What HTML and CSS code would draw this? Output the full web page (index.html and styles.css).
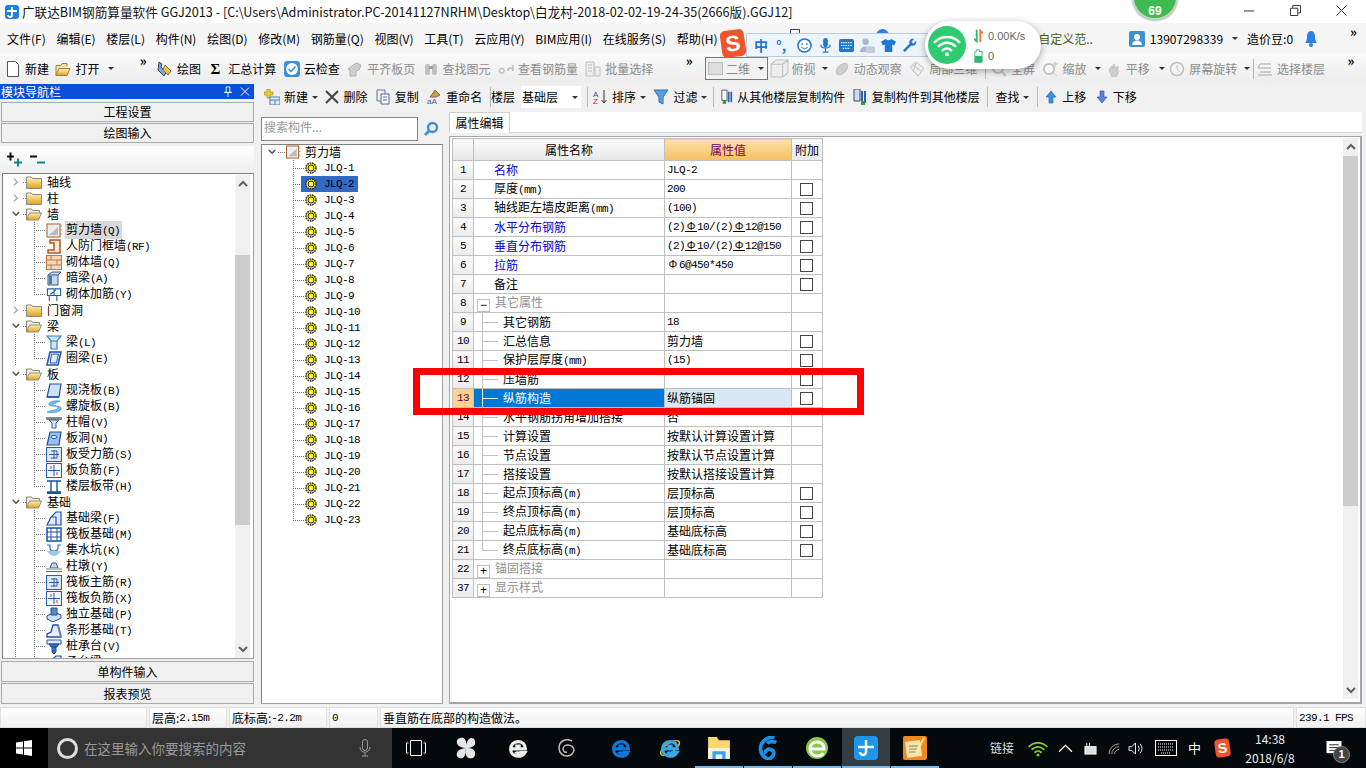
FILE: index.html
```html
<!DOCTYPE html>
<html lang="zh-CN">
<head>
<meta charset="utf-8">
<title>广联达BIM钢筋算量软件 GGJ2013</title>
<link rel="stylesheet" href="styles.css">
</head>
<body>
<svg class="defs" aria-hidden="true">
<defs>
<linearGradient id="gold" x1="0" y1="0" x2="0" y2="1"><stop offset="0" stop-color="#fff3c0"/><stop offset="1" stop-color="#e0a020"/></linearGradient>
<symbol id="chev-r" viewBox="0 0 8 10"><path d="M1.500 1l4 4-4 4" fill="none" stroke="#b0b0b0" stroke-width="2"/></symbol>
<symbol id="chev-d" viewBox="0 0 10 8"><path d="M1 1.500l4 4 4-4" fill="none" stroke="#555" stroke-width="2"/></symbol>
<symbol id="f-c" viewBox="0 0 16 13"><path d="M.5 3V1.500h5l1 1.500h9v10H.5z" fill="url(#gold)" stroke="#8a8a78"/></symbol>
<symbol id="f-o" viewBox="0 0 16 13"><path d="M.5 12V1.500h5l1 1.500h7v2" fill="#f4f0e0" stroke="#8a8a78"/><path d="M.5 12.500l3-7h12l-3 7z" fill="url(#gold)" stroke="#8a8a78"/></symbol>
<symbol id="wall" viewBox="0 0 16 15"><rect x="1" y="1" width="13" height="13" fill="#eee" stroke="#a05a2c"/><path d="M3 12l9-8v8z" fill="#bbb"/><path d="M14 3h2M14 7h2M14 11h2" stroke="#e07820"/></symbol>
<symbol id="door" viewBox="0 0 16 15"><path d="M4 1h10v13H2v-3h6V4H4z" fill="#fbe9d8" stroke="#b05a20" stroke-width="1.500"/></symbol>
<symbol id="brick" viewBox="0 0 16 15"><rect x=".5" y=".5" width="15" height="14" fill="#f8d8b8" stroke="#c07840"/><path d="M0 5h16M0 10h16M5 0v5M11 5v5M5 10v5" stroke="#c07840"/></symbol>
<symbol id="dbeam" viewBox="0 0 16 15"><path d="M2 4l4-3h9l-3 3v10H2z" fill="#c8d8ea" stroke="#305a90"/><path d="M2 4h10" stroke="#305a90"/><rect x="3" y="5" width="3" height="8" fill="#4a7ab0"/></symbol>
<symbol id="arebar" viewBox="0 0 16 16"><path d="M1 2h14v7H1zM3 9v6M11 9v6M4 8l6-5M8 3v6" fill="#fff" stroke="#2560b0" stroke-width="1.200"/></symbol>
<symbol id="beam" viewBox="0 0 16 15"><path d="M1 1h14l-4 5v8H5V6z" fill="#cfe4f8" stroke="#3a80c8" stroke-width="1.200"/><path d="M5 6h6" stroke="#3a80c8"/></symbol>
<symbol id="ring" viewBox="0 0 16 15"><path d="M4 1h11l-3 13H1z" fill="#fff" stroke="#1c50a8" stroke-width="1.500"/><path d="M5.500 3h7l-2 9H4z" fill="#dfeafa" stroke="#1c50a8"/></symbol>
<symbol id="slab" viewBox="0 0 16 15"><path d="M4 1h11l-2 13H1z" fill="#cfe2f8" stroke="#1c50a8" stroke-width="1.200"/><path d="M1 14h12" stroke="#1c50a8" stroke-width="1.500"/></symbol>
<symbol id="spiral" viewBox="0 0 16 15"><path d="M14 2C8 1 2 3 3 6c1 2 9 0 9 3 0 2-7 2-11 4 5 1 12 1 14-3 1-3-7-3-8-4s3-2 7-4z" fill="#7ab8ee" stroke="#2f7fd0" stroke-width=".6"/></symbol>
<symbol id="cap" viewBox="0 0 16 15"><rect x="0" y="2" width="16" height="3" fill="#888"/><path d="M3 5h10l-3 3v5H6V8z" fill="#dbe8f8" stroke="#2060b0"/></symbol>
<symbol id="hole" viewBox="0 0 16 15"><path d="M4 1h11l-2 13H1z" fill="#9cc0ea" stroke="#1c50a8" stroke-width="1.200"/><ellipse cx="8" cy="6" rx="3" ry="1.500" fill="#fff" stroke="#1c50a8"/></symbol>
<symbol id="grid" viewBox="0 0 16 15"><rect x=".5" y=".5" width="15" height="14" fill="#dce9f9" stroke="#2560b0"/><path d="M3 7.500h10M8 3v9M5 4h6v7H5" fill="none" stroke="#2560b0"/></symbol>
<symbol id="grid2" viewBox="0 0 16 15"><rect x=".5" y=".5" width="15" height="14" fill="#eef4fc" stroke="#2560b0"/><path d="M2 7.500h12M8 2v11" stroke="#2560b0"/><path d="M5 3v3M11 9v3" stroke="#e04040"/></symbol>
<symbol id="strip" viewBox="0 0 16 15"><path d="M1 2h14M1 13h14M5 2v11M11 2v11" stroke="#1c50a8" stroke-width="1.400"/><rect x="1" y="13" width="14" height="2" fill="#1c50a8"/></symbol>
<symbol id="fbeam" viewBox="0 0 16 15"><path d="M1 14l4-8 5-5h5v13zM5 6h5v8H5" fill="#dce9f9" stroke="#1c50a8" stroke-width="1.200"/></symbol>
<symbol id="raft" viewBox="0 0 16 15"><rect x="1" y="1" width="14" height="13" fill="#fff" stroke="#1c50a8" stroke-width="1.500"/><path d="M1 5h14M1 10h14M5 1v13M11 1v13" stroke="#1c50a8"/></symbol>
<symbol id="pit" viewBox="0 0 16 15"><path d="M1 2h3v3q0 3 4 3t4-3V2h3" fill="none" stroke="#2f6fc0" stroke-width="1.200"/><path d="M1 8q7 10 14 0z" fill="#a8c8e8"/></symbol>
<symbol id="pier" viewBox="0 0 16 15"><path d="M6 4h4l2 5H4z" fill="#c8d8ea" stroke="#305a90"/><rect x="0" y="9" width="16" height="2" fill="#bbb"/><rect x="0" y="12" width="16" height="1" fill="#666"/></symbol>
<symbol id="iso" viewBox="0 0 16 15"><path d="M1 9l7-4 7 3v3l-8 4-6-3z" fill="#cfe0f4" stroke="#1c50a8"/><path d="M5 1h6v7H5z" fill="#5b8ac0" stroke="#1c50a8"/></symbol>
<symbol id="sfound" viewBox="0 0 16 15"><path d="M1 14v-3l4-2 2-7h5l3 12z" fill="#e6eef9" stroke="#1c50a8" stroke-width="1.300"/><path d="M12 2l3 12" stroke="#5b8ac0" stroke-width="2"/></symbol>
<symbol id="pile" viewBox="0 0 16 15"><path d="M1 1h14v4H1z" fill="#dce9f9" stroke="#305a90"/><path d="M3 5h10l-2 3H5zM6 8h4v5l-2 2-2-2z" fill="#3a70b8" stroke="#1c50a8"/></symbol>
<symbol id="gear" viewBox="0 0 12 12"><circle cx="6" cy="6" r="5" fill="#ffee00" stroke="#333" stroke-width="1.600" stroke-dasharray="1.600 .8"/><circle cx="6" cy="6" r="3" fill="#ffee00" stroke="#333"/><circle cx="6" cy="6" r="1" fill="#fff"/></symbol>
<symbol id="wifi" viewBox="0 0 24 20"><path d="M1.500 7.500a15 15 0 0 1 21 0M5 11a10 10 0 0 1 14 0M8.500 14.500a5 5 0 0 1 7 0" fill="none" stroke="currentColor" stroke-width="2.200" stroke-linecap="round"/><circle cx="12" cy="18" r="1.700" fill="currentColor"/></symbol>
<symbol id="ie" viewBox="0 0 24 24"><path d="M4 13h16c0-5-3-8-8-8s-8 4-8 8.500S8 21 12 21c3 0 6-1.500 7.500-4h-5c-1 1-4 1-5-1M9 10h6" fill="none" stroke="currentColor" stroke-width="3.500"/></symbol>
</defs>
</svg>

<header class="titlebar">
  <svg class="app" viewBox="0 0 14 14"><rect width="14" height="14" rx="3" fill="#2080e0"/><path d="M7 2v8a2 2 0 0 1-4 0M2 6h10" fill="none" stroke="#fff" stroke-width="1.800"/></svg>
  <span class="title">广联达BIM钢筋算量软件 GGJ2013 - [C:\Users\Administrator.PC-20141127NRHM\Desktop\白龙村-2018-02-02-19-24-35(2666版).GGJ12]</span>
  <div class="winbtns">
    <svg viewBox="0 0 12 12"><path d="M0 6.500h11" stroke="#222"/></svg>
    <svg viewBox="0 0 12 12"><path d="M.5 3.500h8v8h-8zM3 3V.5h8.500v8H9" fill="none" stroke="#222"/></svg>
    <svg viewBox="0 0 12 12"><path d="M.5.500l11 11M11.500.500l-11 11" stroke="#222"/></svg>
  </div>
</header>

<nav class="menubar">
  <span>文件(F)</span><span>编辑(E)</span><span>楼层(L)</span><span>构件(N)</span><span>绘图(D)</span><span>修改(M)</span><span>钢筋量(Q)</span><span>视图(V)</span><span>工具(T)</span><span>云应用(Y)</span><span>BIM应用(I)</span><span>在线服务(S)</span><span>帮助(H)</span>
  <div class="menuright">
    <span class="custom">自定义范..</span>
    <span class="user"><svg viewBox="0 0 16 16"><rect width="16" height="16" rx="2" fill="#3f8fd0"/><circle cx="8" cy="6" r="3" fill="#fff"/><path d="M3 14c0-6 10-6 10 0z" fill="#fff"/></svg><span>13907298339</span></span>
    <i class="caret"></i>
    <span>造价豆:0</span>
    <svg class="bell" viewBox="0 0 12 18"><path d="M6 1c3 0 4 3 4 6s1 5 2 6H0c1-1 2-3 2-6s1-6 4-6z" fill="#2a80e8"/><circle cx="6" cy="15" r="2" fill="#2a80e8"/></svg>
    <b class="more">»</b>
  </div>
</nav>

<div class="toolbar">
  <span class="t"><svg class="ti" viewBox="0 0 14 16"><path d="M1.500.500h8l3 3v12h-11z" fill="#fff" stroke="#555"/></svg>新建</span>
  <span class="t t-open"><svg class="ti" viewBox="0 0 16 15"><path d="M1 14V4h5l1-2h5v3" fill="#f5e2a8" stroke="#a08030"/><path d="M1 14l3-7h11l-3 7z" fill="url(#gold)" stroke="#a08030"/></svg>打开<i class="caret c8"></i></span>
  <b class="more m-open">»</b>
  <span class="t"><svg class="ti" viewBox="0 0 16 16"><path d="M2 1l3 2-1 3 5 6-2 3-6-6z" fill="#7aa8d8" stroke="#345"/><path d="M8 4l6 6-3 4-5-5z" fill="#f0c040" stroke="#865"/></svg>绘图</span>
  <span class="t sum"><b>Σ</b>汇总计算</span>
  <span class="t"><svg class="ti" viewBox="0 0 16 16"><rect width="16" height="16" rx="3" fill="#3a90dc"/><circle cx="8" cy="8" r="6" fill="#fff"/><path d="M4.500 8l2.500 2.500 4.500-5" fill="none" stroke="#3a90dc" stroke-width="1.600"/></svg>云检查</span>
  <span class="t off"><svg class="ti" viewBox="0 0 16 16"><path d="M1 8l8-6 5 2-2 5-3 1v5H3V9z" fill="#ccc" stroke="#aaa"/></svg>平齐板页</span>
  <span class="t off"><svg class="ti" viewBox="0 0 16 16"><rect x="2" y="3" width="5" height="11" rx="2" fill="#bbb"/><rect x="9" y="3" width="5" height="11" rx="2" fill="#bbb"/><rect x="6" y="5" width="4" height="3" fill="#999"/></svg>查找图元</span>
  <span class="t off"><svg class="ti" viewBox="0 0 16 16"><path d="M1 10c2-4 5-3 5 0s-4 3-5 0zM10 10c0-4 5-4 5 0M15 4v6" fill="none" stroke="#bbb" stroke-width="1.500"/></svg>查看钢筋量</span>
  <span class="t off"><svg class="ti" viewBox="0 0 16 16"><path d="M1 1h8v14H1zM3 4h4M3 7h4M3 10h4M10 6h5v9h-5z" fill="#eee" stroke="#bbb"/></svg>批量选择</span>
  <b class="more m-view">»</b>
  <span class="dim-box"><i class="sq"></i>二维<i class="caret"></i></span>
  <span class="t off tight"><svg class="ti big" viewBox="0 0 18 18"><path d="M1 5l5-4h11v12l-5 4H1zM1 5h11v12M12 5l5-4" fill="#eee" stroke="#bbb"/></svg>俯视<i class="caret c8"></i></span>
  <span class="t off gapl"><svg class="ti" viewBox="0 0 16 16"><ellipse cx="8" cy="8" rx="7" ry="4" transform="rotate(-45 8 8)" fill="#ccc" stroke="#bbb"/></svg>动态观察</span>
  <span class="t off"><svg class="ti" viewBox="0 0 16 16"><path d="M1 6l6-5 8 6-6 8z" fill="#eee" stroke="#bbb"/><path d="M4 4l8 6M7 2l-3 9" stroke="#bbb"/></svg>局部三维</span>
  <i class="sep"></i>
  <span class="t off t-full"><svg class="ti" viewBox="0 0 16 16"><circle cx="7" cy="7" r="5" fill="none" stroke="#bbb" stroke-width="2"/><path d="M11 11l4 4" stroke="#bbb" stroke-width="2"/></svg>全屏</span>
  <span class="t off"><svg class="ti" viewBox="0 0 16 16"><circle cx="7" cy="8" r="5" fill="#fff" stroke="#bbb" stroke-width="2"/><path d="M11 12l4 3M13 1v5M11 3h5" stroke="#bbb"/></svg>缩放<i class="caret c8"></i></span>
  <span class="t off gapl2"><svg class="ti" viewBox="0 0 16 16"><path d="M3 9l3-4 1 3 1-5 2 5 2-3v7l-2 4H6z" fill="#ccc" stroke="#bbb"/></svg>平移<i class="caret c8"></i></span>
  <span class="t off gapl2"><svg class="ti" viewBox="0 0 16 16"><circle cx="8" cy="8" r="6.500" fill="#f4f4f4" stroke="#bbb" stroke-width="1.500"/><path d="M8 4v4l3 3" fill="none" stroke="#bbb"/></svg>屏幕旋转<i class="caret c4"></i></span>
  <i class="sep sepn"></i>
  <span class="t off"><svg class="ti" viewBox="0 0 16 16"><path d="M3 3h11M1 7h13M3 11h11M1 14h14M1 7l2-4" fill="none" stroke="#bbb" stroke-width="1.500"/></svg>选择楼层</span>
  <b class="more end">»</b>
</div>

<main class="main">
  <aside class="left">
    <div class="dock"><span>模块导航栏</span><span class="dockbtn"><svg viewBox="0 0 10 12"><path d="M3 1h4v6h2H1h2zM5 7v5" fill="none" stroke="#fff"/></svg><svg viewBox="0 0 10 10"><path d="M1 1l8 8M9 1l-8 8" stroke="#fff"/></svg></span></div>
    <button class="nav navtop" type="button">工程设置</button>
    <button class="nav navtop" type="button">绘图输入</button>
    <div class="plusminus">
      <svg viewBox="0 0 16 14"><path d="M0 4h7M3.500 0v8" stroke="#111" stroke-width="2"/><path d="M7 10h8M11 6v8" stroke="#0a8a80" stroke-width="2"/></svg>
      <svg viewBox="0 0 16 14"><path d="M0 4h7" stroke="#111" stroke-width="2"/><path d="M7 10h8" stroke="#0a8a80" stroke-width="2"/></svg>
    </div>
    <div class="treebox navtree">
      <div class="list">
        <div class="p"><svg class="cv"><use href="#chev-r"/></svg><svg class="fd"><use href="#f-c"/></svg>轴线</div>
        <div class="p"><svg class="cv"><use href="#chev-r"/></svg><svg class="fd"><use href="#f-c"/></svg>柱</div>
        <div class="p"><svg class="cv"><use href="#chev-d"/></svg><svg class="fd"><use href="#f-o"/></svg>墙</div>
        <div class="k"><svg class="ic"><use href="#wall"/></svg><span class="cur">剪力墙<span class="m">(Q)</span></span></div>
        <div class="k"><svg class="ic"><use href="#door"/></svg><span>人防门框墙<span class="m">(RF)</span></span></div>
        <div class="k"><svg class="ic"><use href="#brick"/></svg><span>砌体墙<span class="m">(Q)</span></span></div>
        <div class="k"><svg class="ic"><use href="#dbeam"/></svg><span>暗梁<span class="m">(A)</span></span></div>
        <div class="k last"><svg class="ic"><use href="#arebar"/></svg><span>砌体加筋<span class="m">(Y)</span></span></div>
        <div class="p"><svg class="cv"><use href="#chev-r"/></svg><svg class="fd"><use href="#f-c"/></svg>门窗洞</div>
        <div class="p"><svg class="cv"><use href="#chev-d"/></svg><svg class="fd"><use href="#f-o"/></svg>梁</div>
        <div class="k"><svg class="ic"><use href="#beam"/></svg><span>梁<span class="m">(L)</span></span></div>
        <div class="k last"><svg class="ic"><use href="#ring"/></svg><span>圈梁<span class="m">(E)</span></span></div>
        <div class="p"><svg class="cv"><use href="#chev-d"/></svg><svg class="fd"><use href="#f-o"/></svg>板</div>
        <div class="k"><svg class="ic"><use href="#slab"/></svg><span>现浇板<span class="m">(B)</span></span></div>
        <div class="k"><svg class="ic"><use href="#spiral"/></svg><span>螺旋板<span class="m">(B)</span></span></div>
        <div class="k"><svg class="ic"><use href="#cap"/></svg><span>柱帽<span class="m">(V)</span></span></div>
        <div class="k"><svg class="ic"><use href="#hole"/></svg><span>板洞<span class="m">(N)</span></span></div>
        <div class="k"><svg class="ic"><use href="#grid"/></svg><span>板受力筋<span class="m">(S)</span></span></div>
        <div class="k"><svg class="ic"><use href="#grid2"/></svg><span>板负筋<span class="m">(F)</span></span></div>
        <div class="k last"><svg class="ic"><use href="#strip"/></svg><span>楼层板带<span class="m">(H)</span></span></div>
        <div class="p"><svg class="cv"><use href="#chev-d"/></svg><svg class="fd"><use href="#f-o"/></svg>基础</div>
        <div class="k"><svg class="ic"><use href="#fbeam"/></svg><span>基础梁<span class="m">(F)</span></span></div>
        <div class="k"><svg class="ic"><use href="#raft"/></svg><span>筏板基础<span class="m">(M)</span></span></div>
        <div class="k"><svg class="ic"><use href="#pit"/></svg><span>集水坑<span class="m">(K)</span></span></div>
        <div class="k"><svg class="ic"><use href="#pier"/></svg><span>柱墩<span class="m">(Y)</span></span></div>
        <div class="k"><svg class="ic"><use href="#grid"/></svg><span>筏板主筋<span class="m">(R)</span></span></div>
        <div class="k"><svg class="ic"><use href="#grid2"/></svg><span>筏板负筋<span class="m">(X)</span></span></div>
        <div class="k"><svg class="ic"><use href="#iso"/></svg><span>独立基础<span class="m">(P)</span></span></div>
        <div class="k"><svg class="ic"><use href="#sfound"/></svg><span>条形基础<span class="m">(T)</span></span></div>
        <div class="k"><svg class="ic"><use href="#pile"/></svg><span>桩承台<span class="m">(V)</span></span></div>
        <div class="k"><svg class="ic"><use href="#fbeam"/></svg><span>承台梁<span class="m">(F)</span></span></div>
      </div>
      <div class="sbar sb-left">
        <div class="ar"><svg viewBox="0 0 10 8"><path d="M1 6l4-4 4 4" fill="none" stroke="#606060" stroke-width="2"/></svg></div>
        <div class="thumb"></div>
        <div class="track"></div>
        <div class="ar"><svg viewBox="0 0 10 8"><path d="M1 2l4 4 4-4" fill="none" stroke="#606060" stroke-width="2"/></svg></div>
      </div>
    </div>
    <button class="nav nav2" type="button">单构件输入</button>
    <button class="nav" type="button">报表预览</button>
  </aside>

  <section class="work">
    <div class="toolbar2">
      <span class="t"><svg class="ti" viewBox="0 0 16 16"><path d="M3 0h3v3h3v3H6v3H3V6H0V3h3z" fill="#f0c830" stroke="#a08020" stroke-width=".6"/><rect x="6" y="8" width="10" height="8" fill="#dbe8f8" stroke="#5080b0"/><path d="M6 11h10M11 11v5" stroke="#5080b0"/></svg>新建<i class="caret"></i></span>
      <span class="t t-del"><svg class="ti" viewBox="0 0 14 14"><path d="M1 1l12 12M13 1L1 13" stroke="#444" stroke-width="2"/></svg>删除</span>
      <span class="t"><svg class="ti" viewBox="0 0 16 16"><path d="M2 1h8v11H2z" fill="#eef" stroke="#678"/><path d="M6 5h8v10H6z" fill="#fff" stroke="#46a"/><path d="M8 8h4M8 11h4" stroke="#46a"/></svg>复制</span>
      <span class="t"><svg class="ti" viewBox="0 0 16 16"><path d="M4 8l5-7 5 5-4 2z" fill="#c8a040" stroke="#865"/><text x="1" y="15" font-size="8" fill="#2a60a8" font-family="Liberation Sans">aA</text></svg>重命名</span>
      <i class="sep"></i>
      <span class="floor">楼层</span>
      <span class="combo">基础层<i class="caret"></i></span>
      <i class="sep sep-a"></i>
      <span class="t t-sort"><svg class="ti" viewBox="0 0 16 16"><path d="M12 1v13M9.500 11l2.500 3 2.500-3" fill="none" stroke="#333"/><text x="1" y="7.500" font-size="8" fill="#2050b0" font-family="Liberation Sans">A</text><text x="1" y="15" font-size="8" fill="#c02020" font-family="Liberation Sans">Z</text></svg>排序<i class="caret"></i></span>
      <span class="t"><svg class="ti" viewBox="0 0 16 16"><path d="M1 1h14l-5 7v7l-4-2V8z" fill="#5aa0e0" stroke="#2a70b8"/></svg>过滤<i class="caret"></i></span>
      <i class="sep sep-b"></i>
      <span class="t"><svg class="ti w12" viewBox="0 0 14 16"><path d="M1 0h6v12H1z" fill="#fff" stroke="#446"/><path d="M9 2v12M12 2v12" stroke="#2a60b8" stroke-width="2"/><rect x="2" y="12" width="4" height="4" fill="#30a040"/></svg>从其他楼层复制构件</span>
      <span class="t t-to"><svg class="ti" viewBox="0 0 14 16"><path d="M1 0h6v12H1z" fill="#cde" stroke="#446"/><path d="M9 2v12M12 2v12" stroke="#2a60b8" stroke-width="2"/><rect x="8" y="12" width="4" height="4" fill="#30a040"/></svg>复制构件到其他楼层</span>
      <i class="sep"></i>
      <span class="t">查找<i class="caret"></i></span>
      <i class="sep"></i>
      <span class="t mv"><svg class="ti" viewBox="0 0 12 14"><path d="M6 1l5 6H8v6H4V7H1z" fill="#3a90e0" stroke="#1a60b0" stroke-width=".6"/></svg>上移</span>
      <span class="t mv"><svg class="ti" viewBox="0 0 12 14"><path d="M6 13l5-6H8V1H4v6H1z" fill="#5a80d8" stroke="#2a50a0" stroke-width=".6"/></svg>下移</span>
    </div>

    <div class="workbody">
      <div class="mid">
        <div class="searchrow">
          <span class="search">搜索构件...</span>
          <svg class="mag" viewBox="0 0 16 16"><circle cx="9.500" cy="6.500" r="4.500" fill="none" stroke="#3a90dc" stroke-width="2.400"/><path d="M6 10l-4 4" stroke="#3a90dc" stroke-width="2.600"/></svg>
        </div>
        <div class="treebox comptree">
          <div class="root"><svg class="cv"><use href="#chev-d"/></svg><svg class="fd"><use href="#wall"/></svg>剪力墙</div>
          <div class="c"><svg class="gr"><use href="#gear"/></svg><span class="m">JLQ-1</span></div>
          <div class="c sel"><svg class="gr"><use href="#gear"/></svg><span class="m">JLQ-2</span></div>
          <div class="c"><svg class="gr"><use href="#gear"/></svg><span class="m">JLQ-3</span></div>
          <div class="c"><svg class="gr"><use href="#gear"/></svg><span class="m">JLQ-4</span></div>
          <div class="c"><svg class="gr"><use href="#gear"/></svg><span class="m">JLQ-5</span></div>
          <div class="c"><svg class="gr"><use href="#gear"/></svg><span class="m">JLQ-6</span></div>
          <div class="c"><svg class="gr"><use href="#gear"/></svg><span class="m">JLQ-7</span></div>
          <div class="c"><svg class="gr"><use href="#gear"/></svg><span class="m">JLQ-8</span></div>
          <div class="c"><svg class="gr"><use href="#gear"/></svg><span class="m">JLQ-9</span></div>
          <div class="c"><svg class="gr"><use href="#gear"/></svg><span class="m">JLQ-10</span></div>
          <div class="c"><svg class="gr"><use href="#gear"/></svg><span class="m">JLQ-11</span></div>
          <div class="c"><svg class="gr"><use href="#gear"/></svg><span class="m">JLQ-12</span></div>
          <div class="c"><svg class="gr"><use href="#gear"/></svg><span class="m">JLQ-13</span></div>
          <div class="c"><svg class="gr"><use href="#gear"/></svg><span class="m">JLQ-14</span></div>
          <div class="c"><svg class="gr"><use href="#gear"/></svg><span class="m">JLQ-15</span></div>
          <div class="c"><svg class="gr"><use href="#gear"/></svg><span class="m">JLQ-16</span></div>
          <div class="c"><svg class="gr"><use href="#gear"/></svg><span class="m">JLQ-17</span></div>
          <div class="c"><svg class="gr"><use href="#gear"/></svg><span class="m">JLQ-18</span></div>
          <div class="c"><svg class="gr"><use href="#gear"/></svg><span class="m">JLQ-19</span></div>
          <div class="c"><svg class="gr"><use href="#gear"/></svg><span class="m">JLQ-20</span></div>
          <div class="c"><svg class="gr"><use href="#gear"/></svg><span class="m">JLQ-21</span></div>
          <div class="c"><svg class="gr"><use href="#gear"/></svg><span class="m">JLQ-22</span></div>
          <div class="c last"><svg class="gr"><use href="#gear"/></svg><span class="m">JLQ-23</span></div>
        </div>
      </div>

      <div class="props">
        <div class="tabs"><span class="tab">属性编辑</span></div>
        <div class="sheet">
          <table class="grid">
            <colgroup><col class="col0"><col class="col1"><col class="col2"><col class="col3"></colgroup>
            <thead><tr><th></th><th>属性名称</th><th class="hv">属性值</th><th>附加</th></tr></thead>
            <tbody>
              <tr><td class="n">1</td><td class="a blue">名称</td><td class="m">JLQ-2</td><td></td></tr>
              <tr><td class="n">2</td><td class="a">厚度<span class="m">(mm)</span></td><td class="m">200</td><td class="ck"><i></i></td></tr>
              <tr><td class="n">3</td><td class="a">轴线距左墙皮距离<span class="m">(mm)</span></td><td class="m">(100)</td><td class="ck"><i></i></td></tr>
              <tr><td class="n">4</td><td class="a blue">水平分布钢筋</td><td class="m">(2)<b class="rb">Φ</b>10/(2)<b class="rb">Φ</b>12@150</td><td class="ck"><i></i></td></tr>
              <tr><td class="n">5</td><td class="a blue">垂直分布钢筋</td><td class="m">(2)<b class="rb">Φ</b>10/(2)<b class="rb">Φ</b>12@150</td><td class="ck"><i></i></td></tr>
              <tr><td class="n">6</td><td class="a blue">拉筋</td><td class="m"><b class="ph">Φ</b>6@450*450</td><td class="ck"><i></i></td></tr>
              <tr><td class="n">7</td><td class="a">备注</td><td></td><td class="ck"><i></i></td></tr>
              <tr><td class="n">8</td><td class="g"><i class="box">−</i>其它属性</td><td></td><td></td></tr>
              <tr><td class="n">9</td><td class="b">其它钢筋</td><td class="m">18</td><td></td></tr>
              <tr><td class="n">10</td><td class="b">汇总信息</td><td>剪力墙</td><td class="ck"><i></i></td></tr>
              <tr><td class="n">11</td><td class="b">保护层厚度<span class="m">(mm)</span></td><td class="m">(15)</td><td class="ck"><i></i></td></tr>
              <tr><td class="n">12</td><td class="b">压墙筋</td><td></td><td class="ck"><i></i></td></tr>
              <tr class="on"><td class="n">13</td><td class="b">纵筋构造</td><td>纵筋锚固</td><td class="ck"><i></i></td></tr>
              <tr><td class="n">14</td><td class="b">水平钢筋拐角增加搭接</td><td>否</td><td></td></tr>
              <tr><td class="n">15</td><td class="b">计算设置</td><td>按默认计算设置计算</td><td></td></tr>
              <tr><td class="n">16</td><td class="b">节点设置</td><td>按默认节点设置计算</td><td></td></tr>
              <tr><td class="n">17</td><td class="b">搭接设置</td><td>按默认搭接设置计算</td><td></td></tr>
              <tr><td class="n">18</td><td class="b">起点顶标高<span class="m">(m)</span></td><td>层顶标高</td><td class="ck"><i></i></td></tr>
              <tr><td class="n">19</td><td class="b">终点顶标高<span class="m">(m)</span></td><td>层顶标高</td><td class="ck"><i></i></td></tr>
              <tr><td class="n">20</td><td class="b">起点底标高<span class="m">(m)</span></td><td>基础底标高</td><td class="ck"><i></i></td></tr>
              <tr><td class="n">21</td><td class="b endb">终点底标高<span class="m">(m)</span></td><td>基础底标高</td><td class="ck"><i></i></td></tr>
              <tr><td class="n">22</td><td class="g"><i class="box">+</i>锚固搭接</td><td></td><td></td></tr>
              <tr><td class="n">37</td><td class="g"><i class="box">+</i>显示样式</td><td></td><td></td></tr>
            </tbody>
          </table>
          <div class="sbar sb-right">
            <div class="ar"><svg viewBox="0 0 10 8"><path d="M1 6l4-4 4 4" fill="none" stroke="#606060" stroke-width="2"/></svg></div>
            <div class="thumb"></div>
            <div class="track"></div>
            <div class="ar"><svg viewBox="0 0 10 8"><path d="M1 2l4 4 4-4" fill="none" stroke="#606060" stroke-width="2"/></svg></div>
          </div>
        </div>
      </div>
    </div>
  </section>
</main>

<footer class="status">
  <span class="s1"></span>
  <span class="s2">层高:<span class="m">2.15m</span></span>
  <span class="s3">底标高:<span class="m">-2.2m</span></span>
  <span class="s4"><span class="m">0</span></span>
  <span class="s5">垂直筋在底部的构造做法。</span>
  <span class="s6"><span class="m">239.1 FPS</span></span>
</footer>

<div class="taskbar">
  <div class="start"><svg viewBox="0 0 16 16"><path d="M0 2.500l7-1v6H0zM8 1.300l8-1.200V7.500H8zM0 8.500h7v6l-7-1zM8 8.500h8v7.400l-8-1.200z" fill="#fff"/></svg></div>
  <div class="cortana"><i class="ring"></i><span>在这里输入你要搜索的内容</span><svg class="mic" viewBox="0 0 12 18"><rect x="3.500" y=".5" width="5" height="11" rx="2.500" fill="none" stroke="#999"/><path d="M1 8c0 7 10 7 10 0M6 14v3M3 17h6" fill="none" stroke="#999"/></svg></div>
  <svg class="tv" viewBox="0 0 20 16"><path d="M4.500.500h11v15h-11zM2.500 3H.5v10h2M17.500 3h2v10h-2" fill="none" stroke="#fff"/></svg>
  <div class="apps">
    <span class="a0"><svg viewBox="0 0 22 24"><path d="M11 12C3 12 1 8 1 5s4-5 7-4 4 6 3 11c6 0 10 1 10 6s-4 6-7 5-4-6-3-11zM11 12C5 13 2 14 1 18s3 6 6 5 4-6 4-11c0-5 2-11 6-11s4 4 4 6-3 5-10 5z" fill="#e6e6e6"/></svg></span>
    <span class="a0 white"><svg viewBox="0 0 24 24"><use href="#ie"/></svg></span>
    <span class="a0 spiral"><svg viewBox="0 0 20 20"><path d="M15 3C9 0 2 3 2 10c0 5 4 8 8 8s7-3 7-6-3-5-6-5-5 2-5 4 2 4 4 3" fill="none" stroke="#bbb" stroke-width="1.500"/></svg></span>
    <span class="a0 edge"><svg viewBox="0 0 24 24"><use href="#ie"/></svg></span>
    <span class="a0 iew"><svg viewBox="0 0 24 24"><ellipse cx="12" cy="12" rx="12" ry="5" transform="rotate(-35 12 12)" fill="none" stroke="#f0c020" stroke-width="1.600"/><use href="#ie"/></svg></span>
    <span class="a1"><svg viewBox="0 0 22 22"><path d="M1 1h8l2 3h10v17H1z" fill="#fbd671"/><rect x="1" y="11" width="20" height="10" fill="#f4f0e0"/><path d="M5 21v-7h12v7h-3v-4H8v4z" fill="#39a0ea"/></svg></span>
    <span class="a1"><svg viewBox="0 0 22 26"><path d="M18 1C9 1 2 7 3 15s8 11 11 9 5-7 1-9-8 1-6 4M10 8c3-3 8-2 10-1" fill="none" stroke="#1d8fe8" stroke-width="4"/></svg></span>
    <span class="a1 gie"><svg viewBox="0 0 24 24"><circle cx="12" cy="12" r="11" fill="#8bc84a"/><path d="M5 13h14c0-5-3-7-7-7s-7 3-7 7 3 7 7 7c3 0 5-1 6-3" fill="none" stroke="#fff" stroke-width="3"/></svg></span>
    <span class="a1 act"><svg viewBox="0 0 24 24"><rect width="24" height="24" rx="4" fill="#1c96ea"/><path d="M12 4v12a3 3 0 0 1-6 0M4 11h16" fill="none" stroke="#fff" stroke-width="2.400"/></svg></span>
    <span class="a1"><svg viewBox="0 0 24 24"><rect width="24" height="24" rx="2" fill="#f08a20"/><rect x="3" y="5" width="15" height="16" fill="#f4e4b0" transform="rotate(-8 10 13)"/><path d="M6 10h9M6 13h9M6 16h8" stroke="#886"/><path d="M21 2l-8 15" stroke="#fff080" stroke-width="2"/></svg></span>
  </div>
  <div class="tray">
    <span class="lnk">链接</span>
    <svg class="tg" viewBox="0 0 24 20"><use href="#wifi"/></svg>
    <svg class="tr" viewBox="0 0 14 8"><path d="M1 7l6-6 6 6" fill="none" stroke="#fff" stroke-width="1.200"/></svg>
    <svg class="tr" viewBox="0 0 16 14"><rect x="2" y="5" width="12" height="8" fill="#ddd" stroke="#fff"/><path d="M4 1v4M7 1v4" stroke="#fff"/></svg>
    <svg class="tr nr" viewBox="0 0 16 14"><path d="M1 13a11 11 0 0 1 11-11M4 13a8 8 0 0 1 8-8M7 13a5 5 0 0 1 5-5" fill="none" stroke="#aaa"/></svg>
    <svg class="tr" viewBox="0 0 16 14"><path d="M1 5h3l4-4v12l-4-4H1zM11 4q2 3 0 6M13 2q4 5 0 10" fill="none" stroke="#fff"/></svg>
    <svg class="tk" viewBox="0 0 22 16"><rect x=".5" y=".5" width="21" height="15" fill="none" stroke="#fff"/><path d="M3 4h16M3 7h16M3 10h16M6 13h10" stroke="#fff" stroke-dasharray="1 1"/></svg>
    <span class="zh">中</span>
    <span class="sg">S</span>
    <span class="clock"><span>14:38</span><span>2018/6/8</span></span>
    <span class="note"><svg viewBox="0 0 16 16"><path d="M0 0h16v13H0z" fill="#fff"/><path d="M3 4h10M3 7h10M3 10h7" stroke="#222"/></svg><b>1</b></span>
  </div>
</div>

<!-- floating overlays -->
<div class="ball"><span>69</span></div>
<div class="peek pk1"></div>
<div class="peek pk2"></div>
<div class="sogou">
  <span class="slogo">S</span>
  <b class="zhb">中</b>
  <b class="punct">°,</b>
  <svg viewBox="0 0 16 16"><circle cx="8" cy="8" r="7" fill="#fff" stroke="#1f78d0" stroke-width="1.600"/><circle cx="5.500" cy="6.500" r="1" fill="#1f78d0"/><circle cx="10.500" cy="6.500" r="1" fill="#1f78d0"/><path d="M4.500 10q3.500 3 7 0" fill="none" stroke="#1f78d0"/></svg>
  <svg viewBox="0 0 12 16"><rect x="3.500" y="0" width="5" height="10" rx="2.500" fill="#1f78d0"/><path d="M1 7c0 5 10 5 10 0M6 11v4M3 15h6" fill="none" stroke="#1f78d0" stroke-width="1.300"/></svg>
  <svg viewBox="0 0 16 14"><rect width="16" height="14" rx="2" fill="#1f78d0"/><path d="M2 4h12M2 7h12M4 10h8" stroke="#fff" stroke-width="1.300" stroke-dasharray="1.500 1"/></svg>
  <svg viewBox="0 0 16 16"><circle cx="6" cy="4" r="3.500" fill="#a8b8cc"/><path d="M0 15c0-8 12-8 12 0z" fill="#a8b8cc"/><rect x="6" y="9" width="10" height="7" rx="1" fill="#c4ccd8"/></svg>
  <svg viewBox="0 0 16 16"><path d="M5 1L0 4l2 4 2-1v8h8V7l2 1 2-4-5-3q-3 3-6 0z" fill="#1f78d0"/></svg>
  <svg viewBox="0 0 16 16"><path d="M15 3l-3 3-2-2 3-3C10 0 7 2 8 6l-7 7 2 2 7-7c4 1 6-2 5-5z" fill="#1f78d0"/></svg>
</div>
<div class="netpill">
  <span class="gc"><svg viewBox="0 0 24 20"><use href="#wifi"/></svg></span>
  <div class="netinfo">
    <div><svg viewBox="0 0 10 14"><path d="M3 0v13L0 10" fill="none" stroke="#2bb673" stroke-width="2"/><path d="M7 14V1l3 3" fill="none" stroke="#f07820" stroke-width="2"/></svg>0.00K/s</div>
    <div><svg viewBox="0 0 10 14"><path d="M3 0h3v2h3v12H1V2h2z" fill="#fff" stroke="#2bb673"/><rect x="1" y="7" width="8" height="7" fill="#2bb673"/></svg>0</div>
  </div>
</div>
<div class="redbox"></div>
</body>
</html>
```
FILE: styles.css
```css
* { box-sizing: border-box; }
html, body { margin: 0; height: 100%; }
body {
  width: 1366px; height: 768px; overflow: hidden; position: relative;
  display: flex; flex-direction: column;
  font: 12px/16px "Noto Sans CJK SC", "Liberation Sans", sans-serif;
  color: #000; background: #f0f0f0;
}
svg { display: block; flex: none; }
.defs { position: absolute; width: 0; height: 0; }
.m { font-family: "Liberation Mono", "Noto Sans CJK SC", monospace; font-size: 11px; letter-spacing: -.6px; }

.titlebar { height: 23px; flex: none; background: #fff; display: flex; align-items: center; padding-left: 5px; }
.app { width: 14px; height: 14px; margin-right: 3px; }
.title { white-space: nowrap; font-size: 12.640px; color: #111; }
.winbtns { margin-left: auto; display: flex; padding-right: 19px; margin-top: -3px; }
.winbtns svg { width: 11px; height: 11px; margin-left: 35px; }

.menubar { height: 31px; flex: none; background: #f5f5f5; display: flex; align-items: center; gap: 10.700px; padding-left: 7px; white-space: nowrap; }
.menuright { margin-left: auto; display: flex; align-items: center; gap: 9px; }
.custom { color: #4d5a10; margin-right: 27px; }
.user { display: flex; align-items: center; gap: 5px; }
.user svg { width: 16px; height: 16px; }
.bell { width: 12px; height: 18px; margin-left: 3px; }
.more { font-weight: 700; font-size: 13px; line-height: 12px; align-self: flex-start; }
.menuright .more { margin: 0 9px 0 24px; align-self: center; transform: translateY(-7px); }
.caret { display: inline-block; width: 0; height: 0; border: 3px solid transparent; border-top: 3px solid #333; border-bottom: 0; flex: none; }

.toolbar { height: 29px; flex: none; display: flex; align-items: center; gap: 7.400px; padding-left: 5px; background: linear-gradient(#fafafa, #ececec); white-space: nowrap; }
.t { display: flex; align-items: center; gap: 4px; }
.ti { width: 16px; height: 16px; }
.big { width: 19px; height: 19px; }
.off { color: #8c8c8c; }
.off .ti { opacity: .9; }
.c8 { margin-left: 5px; }
.c4 { margin-left: 3px; }
.sum b { font-family: "Liberation Serif", serif; font-size: 15px; margin: 0 4px 0 2px; }
.t-open { margin-left: -1px; }
.m-open { margin-left: 18px; margin-right: 3px; transform: translateY(1px); }
.m-view { margin-left: 25px; margin-right: 5px; transform: translateY(1px); }
.end { margin-left: 15px; transform: translateY(1px); }
.dim-box { width: 63px; height: 23px; border: 1px solid #777; display: flex; align-items: center; color: #888; padding-left: 2px; gap: 3px; background: #f2f2f2; }
.sq { width: 15px; height: 13px; background: #ddd; border: 1px solid #bbb; }
.dim-box .caret { margin-left: 5px; }
.tight { gap: 2px; margin-left: -5px; }
.gapl { margin-left: -2px; }
.gapl2 { margin-left: -3px; }
.t-full { margin-left: -2px; }
.sep { width: 1px; height: 20px; background: #b8b8b8; flex: none; }
.sepn { margin: 0 -4px 0 -5px; }

.main { flex: 1; min-height: 0; display: flex; gap: 2px; }
.left { width: 256px; flex: none; display: flex; flex-direction: column; padding: 1px 2px 0 0; }
.dock { height: 15px; flex: none; background: #0a50d8; color: #fff; display: flex; justify-content: space-between; align-items: center; padding-left: 1px; margin-bottom: 3px; }
.dockbtn { display: flex; gap: 7px; padding-right: 4px; }
.dockbtn svg { width: 10px; height: 11px; }
.nav { height: 21px; flex: none; margin: 0 0 1px 1px; padding: 0; background: #f0f0f0; border: 1px solid #a8a8a8; font: inherit; color: #000; }
.navtop { height: 20px; }
.nav2 { margin-top: 2px; }
.plusminus { height: 27px; flex: none; margin-top: 2px; display: flex; align-items: center; gap: 7px; padding: 0 0 0 7px; background: linear-gradient(#fff, #efefef); }
.plusminus svg { width: 16px; height: 15px; }

.treebox { background: #fff; border: 1px solid #a0a0a0; border-top-color: #808080; border-left-color: #808080; }
.navtree { flex: 1; min-height: 0; margin-left: 2px; display: flex; overflow: hidden; }
.list { flex: 1; min-width: 0; overflow: hidden; }
.p, .k, .root, .c { height: 16px; display: flex; align-items: center; white-space: nowrap; }
.p { padding-left: 9px; background: repeating-linear-gradient(90deg, #777 0 1px, transparent 1px 2px) 20px 8px / 4px 1px no-repeat; }
.cv { width: 8px; height: 8px; margin-right: 6px; }
.fd { width: 16px; height: 14px; margin-right: 5px; }
.k {
  padding-left: 43px; gap: 4px;
  background:
    repeating-linear-gradient(#777 0 1px, transparent 1px 2px) 12px 0 / 1px 100% no-repeat,
    repeating-linear-gradient(#777 0 1px, transparent 1px 2px) 31px 0 / 1px 100% no-repeat,
    repeating-linear-gradient(90deg, #777 0 1px, transparent 1px 2px) 31px 8px / 11px 1px no-repeat;
}
.k.last {
  background:
    repeating-linear-gradient(#777 0 1px, transparent 1px 2px) 12px 0 / 1px 100% no-repeat,
    repeating-linear-gradient(#777 0 1px, transparent 1px 2px) 31px 0 / 1px 8px no-repeat,
    repeating-linear-gradient(90deg, #777 0 1px, transparent 1px 2px) 31px 8px / 11px 1px no-repeat;
}
.ic { width: 16px; height: 15px; }
.cur { background: #d9d9d9; padding: 0 2px 0 1px; margin-left: -1px; }

.sbar { background: #f0f0f0; display: flex; flex-direction: column; flex: none; width: 15px; }
.ar { height: 18px; flex: none; display: flex; align-items: center; justify-content: center; }
.ar svg { width: 10px; height: 8px; }
.thumb { background: #cdcdcd; }
.track { flex: 1; }
.sb-left { margin: 1px 3px 0 0; }
.sb-left .thumb { margin-top: 62px; height: 270px; }

.work { flex: 1; min-width: 0; display: flex; flex-direction: column; padding-top: 1px; }
.toolbar2 { height: 26px; flex: none; display: flex; align-items: center; gap: 7.400px; padding-left: 6px; background: #f0f0f0; white-space: nowrap; }
.t-del .ti { width: 14px; height: 14px; }
.floor { margin-left: -7px; }
.combo { width: 60px; height: 22px; margin-left: -1.400px; background: #fff; display: flex; align-items: center; justify-content: space-between; padding: 0 3px 0 1px; }
.sep-a { margin-left: -1.400px; }
.t-sort { margin-left: -3.400px; }
.sep-b { margin-left: -2px; }
.w12 { width: 12px; }
.t-to { margin-left: -1px; }
.mv { gap: 5px; }
.mv + .mv { margin-left: 2px; }
.mv .ti { width: 12px; height: 14px; }

.workbody { flex: 1; min-height: 0; display: flex; gap: 6px; }
.mid { width: 185px; flex: none; display: flex; flex-direction: column; padding: 7px 0 1px 3px; }
.searchrow { height: 24px; flex: none; display: flex; align-items: center; margin-bottom: 3px; }
.search { width: 157px; height: 24px; background: #fff; border: 1px solid #888; color: #999; padding: 1px 2px; }
.mag { width: 16px; height: 16px; margin-left: 5px; }
.comptree { flex: 1; min-height: 0; overflow: hidden; }
.root { padding-left: 6px; margin-top: -1px; background: repeating-linear-gradient(90deg, #777 0 1px, transparent 1px 2px) 16px 8px / 8px 1px no-repeat; }
.root .cv { margin-right: 9px; }
.root .fd { margin-right: 4px; }
.c {
  padding-left: 40px;
  background:
    repeating-linear-gradient(#777 0 1px, transparent 1px 2px) 31px 0 / 1px 100% no-repeat,
    repeating-linear-gradient(90deg, #777 0 1px, transparent 1px 2px) 31px 8px / 11px 1px no-repeat;
}
.c.last { background-size: 1px 8px, 11px 1px; }
.gr { width: 12px; height: 12px; margin-right: 7px; margin-left: 3px; }
.sel {
  background:
    linear-gradient(#316ac5, #316ac5) 39px 0 / 57px 100% no-repeat,
    repeating-linear-gradient(#777 0 1px, transparent 1px 2px) 31px 0 / 1px 100% no-repeat,
    repeating-linear-gradient(90deg, #777 0 1px, transparent 1px 2px) 31px 8px / 8px 1px no-repeat;
}

.props { flex: 1; min-width: 0; display: flex; flex-direction: column; padding: 2px 4px 1px 0; }
.tabs { height: 21px; flex: none; background: linear-gradient(#fff, #fff) 61px 0 / 100% 20px no-repeat; border-bottom: 1px solid #d4d4d4; }
.tab { display: block; width: 61px; height: 21px; background: #fff; border: 1px solid #d0d0d0; border-bottom: 0; text-align: center; line-height: 19px; }
.sheet { flex: 1; min-height: 0; margin-top: 3px; background: #fff; border: 1px solid #a4a4ac; border-width: 1px 2px 2px 1px; padding: 1px 1px 3px 2px; display: flex; justify-content: space-between; align-items: stretch; }
.grid { border-collapse: collapse; table-layout: fixed; width: 370px; height: 459px; flex: none; }
.col0 { width: 21px; } .col1 { width: 191px; } .col2 { width: 127px; } .col3 { width: 31px; }
.grid th, .grid td { border: 1px solid #c0c0c0; padding: 0; height: 19px; font-weight: 400; white-space: nowrap; overflow: hidden; line-height: 16px; }
.grid th { height: 22px; background: linear-gradient(#fcfcfc, #e8e8e8); text-align: center; }
.grid .hv { background: linear-gradient(#fde0a8, #f3c060); color: #800060; }
.grid td { padding-left: 2px; }
.grid td.m { font-size: 11px; }
.grid td.n { padding: 0; text-align: center; background: linear-gradient(#fbfbfb, #ebebeb); font-family: "Liberation Mono", monospace; font-size: 11px; letter-spacing: -.6px; }
.grid td.a { padding-left: 20px; }
.blue { color: #0000e0; }
.grid td.g { padding-left: 3px; color: #909090; }
.box { display: inline-block; width: 13px; height: 13px; border: 1px solid #c0c0c0; color: #000; font: 12px/11px "Liberation Sans", sans-serif; text-align: center; margin-right: 5px; vertical-align: -2px; }
.grid td.b {
  padding-left: 29px;
  background:
    linear-gradient(#c0c0c0, #c0c0c0) 8px 0 / 1px 100% no-repeat,
    linear-gradient(#c0c0c0, #c0c0c0) 9px 9px / 15px 1px no-repeat;
}
.grid td.endb { background-size: 1px 10px, 15px 1px; }
.rb { display: inline-block; width: 12px; text-align: center; font: 400 11px/9px "Liberation Sans", sans-serif; letter-spacing: 0; border-bottom: 1px solid #000; }
.ph { display: inline-block; width: 12px; text-align: center; font: 400 11px/11px "Liberation Sans", sans-serif; letter-spacing: 0; }
.ck i { display: block; width: 13px; height: 13px; margin-left: 6px; border: 1px solid #444; background: #fff; }
.on td.n { background: #fbd38a; color: #600050; }
.grid .on td.b {
  color: #fff;
  background:
    linear-gradient(#e0f0ff, #e0f0ff) 8px 0 / 1px 100% no-repeat,
    linear-gradient(#e0f0ff, #e0f0ff) 9px 9px / 15px 1px no-repeat,
    #0078d7;
}
.on td:nth-child(3) { background: #d8e8f6; }
.sb-right { margin-right: 1px; }
.sb-right .thumb { height: 350px; }

.status { height: 23px; flex: none; display: flex; gap: 2px; padding-top: 2px; }
.status span:not(.m) { display: flex; align-items: center; background: linear-gradient(#fff, #f0f0f0); border: 1px solid #e0e0e0; padding-left: 2px; white-space: nowrap; }
.s1 { width: 147px; }
.s2 { width: 78px; }
.s3 { width: 98px; }
.s4 { width: 49px; }
.s5 { width: 914px; }
.s6 { flex: 1; padding-left: 1px; }

.taskbar { height: 40px; flex: none; background: #04090c; display: flex; align-items: center; color: #fff; }
.start { width: 48px; height: 40px; background: #000; display: flex; align-items: center; justify-content: center; }
.start svg { width: 16px; height: 16px; }
.cortana { width: 344px; height: 40px; background: #333; display: flex; align-items: center; padding-left: 9px; color: #999; font-size: 13.500px; }
.ring { width: 21px; height: 21px; border: 3px solid #ddd; border-radius: 50%; margin-right: 6px; }
.mic { width: 12px; height: 18px; margin-left: 113px; }
.tv { width: 20px; height: 16px; margin-left: 14px; }
.apps { display: flex; align-items: center; height: 40px; margin-left: 16px; gap: 1px; }
.apps span { height: 40px; display: flex; align-items: center; justify-content: center; position: relative; }
.a0 { width: 48px; color: #eee; }
.a0 svg { width: 22px; height: 22px; }
.a0.white { margin-left: 3px; }
.a0.spiral svg { width: 20px; height: 20px; }
.a0.edge { color: #0f78d8; margin-left: 5px; }
.a0.iew { color: #3aa8e8; }
.a1 { width: 48px; box-shadow: inset 0 -2px 0 #76b9ed; }
.a1 svg { width: 24px; height: 24px; }
.a1.act { background: #333d42; }
.tray { margin-left: auto; display: flex; align-items: center; height: 40px; }
.lnk { color: #ddd; margin-right: 14px; }
.tg { width: 20px; height: 17px; color: #7ed321; margin-right: 10px; }
.tr { width: 15px; height: 13px; margin-right: 10px; }
.nr { margin-right: 5px; }
.tk { width: 22px; height: 16px; margin: 0 11px 0 2px; }
.zh { margin-right: 14px; font-size: 13px; }
.sg { width: 15px; height: 18px; background: #f0542a; border-radius: 4px; font: 700 14px/18px "Liberation Sans", sans-serif; text-align: center; transform: rotate(-8deg); }
.clock { width: 70px; margin-left: 5px; display: flex; flex-direction: column; align-items: center; gap: 3px; line-height: 16px; color: #eee; }
.note { width: 40px; margin-left: 13px; margin-right: 8px; position: relative; display: block; }
.note svg { width: 16px; height: 15px; margin-left: 8px; }
.note b { position: absolute; left: 15px; top: 5px; width: 17px; height: 17px; border-radius: 50%; background: #444; border: 1px solid #888; font: 700 11px/15px "Liberation Sans", sans-serif; text-align: center; }

.ball { position: absolute; left: 1132px; top: -25px; width: 46px; height: 45px; border-radius: 50%; background: #3dbb4e; border: 2px solid #c8d0c8; color: #fff; font: 700 12px/14px "Liberation Sans", sans-serif; text-align: center; padding-top: 27px; box-shadow: 0 1px 2px rgba(0,0,0,.3); }
.peek { position: absolute; top: 29px; }
.pk1 { left: 790px; width: 10px; height: 6px; border: 1px solid #446; background: #fff; }
.pk2 { left: 876px; width: 13px; height: 8px; border-radius: 7px 7px 0 0; background: #2a80e8; }
.sogou { position: absolute; left: 746px; top: 33px; width: 182px; height: 24px; background: #eef4fb; border: 1px solid #b9cde5; display: flex; align-items: center; gap: 6px; padding-left: 4px; }
.sogou svg { width: 15px; height: 15px; }
.slogo { position: absolute; left: -26px; top: -4px; width: 24px; height: 27px; background: #f0542a; border-radius: 5px; color: #fff; font: 700 22px/27px "Liberation Sans", sans-serif; text-align: center; transform: rotate(-8deg); }
.zhb { color: #1f78d0; font-size: 14px; width: 16px; margin-left: 3px; }
.punct { color: #1f78d0; font-size: 14px; width: 15px; line-height: 12px; }
.netpill { position: absolute; left: 925px; top: 21px; width: 116px; height: 48px; background: #fff; border-radius: 24px; box-shadow: 0 2px 7px rgba(0,0,0,.35); display: flex; align-items: center; padding-left: 3px; gap: 18px; }
.gc { width: 38px; height: 38px; border-radius: 50%; background: #2ecc71; color: #fff; display: flex; align-items: center; justify-content: center; }
.gc svg { width: 28px; height: 24px; }
.netinfo { display: flex; flex-direction: column; gap: 4px; font-family: "Liberation Sans", sans-serif; color: #666; font-size: 11px; margin-left: -10px; padding-top: 1px; }
.netinfo div { display: flex; align-items: center; gap: 5px; }
.netinfo svg { width: 9px; height: 14px; }
.redbox { position: absolute; left: 413px; top: 368px; width: 451px; height: 47px; border: 7px solid #f00; }
```
